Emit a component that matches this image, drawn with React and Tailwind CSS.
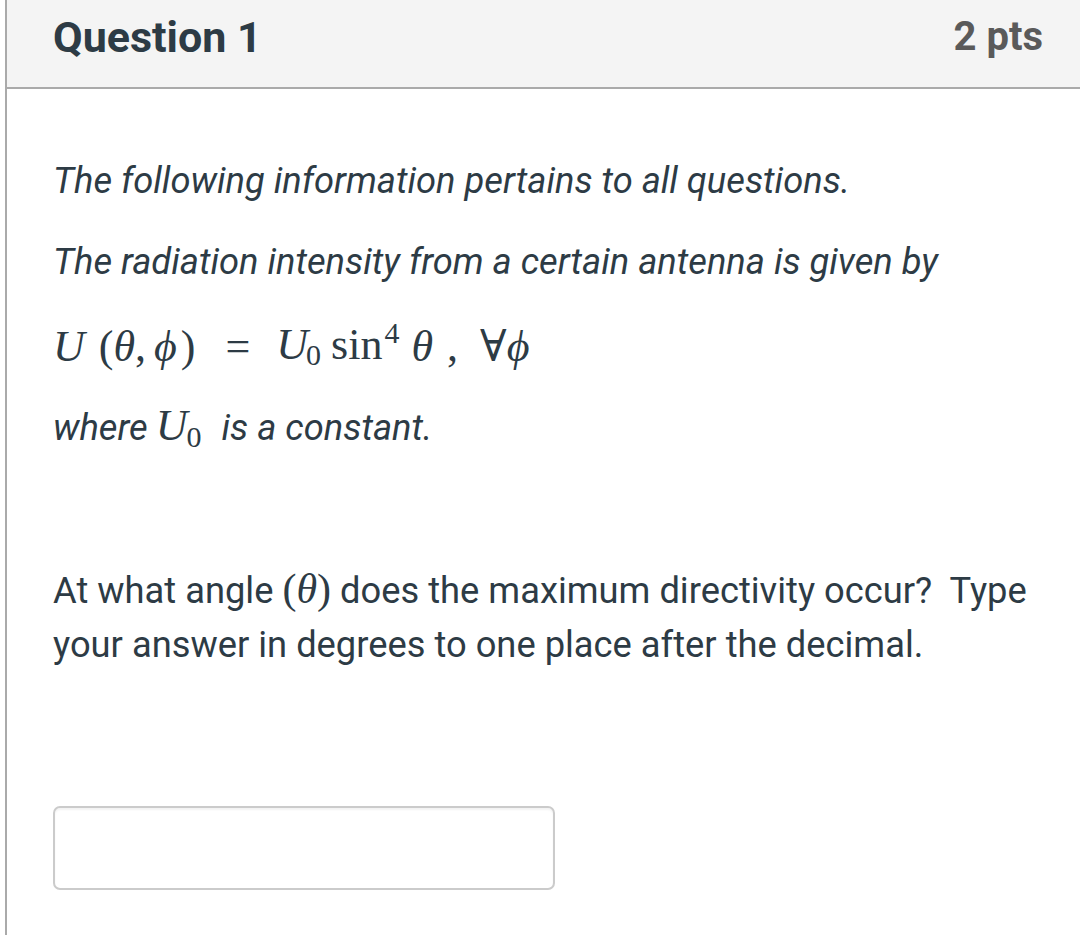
import React from 'react';

const serif = { fontFamily: '"Liberation Serif", "DejaVu Serif", serif' };

function MathI({ children, className = '' }) {
  return (
    <span className={`italic ${className}`} style={serif}>
      {children}
    </span>
  );
}

function MathR({ children, className = '' }) {
  return (
    <span className={className} style={serif}>
      {children}
    </span>
  );
}

export default function App() {
  return (
    <div className="w-[1080px] h-[935px] overflow-hidden bg-white font-['Roboto',sans-serif] text-[#2d3b45]">
      <div className="ml-[5px] w-[1090px] h-[935px] border-l-2 border-[#aaaaaa]">
        {/* header */}
        <div className="h-[89px] bg-[#f4f4f4] border-b-2 border-[#aaaaaa] flex justify-between px-[46px] pt-[12px]">
          <h2 className="text-[43px] leading-[50px] font-bold text-[#2d3b45]">Question 1</h2>
          <div className="text-[40px] leading-[50px] font-bold text-[#5a5a5a] mr-[6px]">2 pts</div>
        </div>

        {/* body */}
        <div className="px-[46px] pt-[65px] text-[36.3px] leading-[54px]">
          <p className="italic mb-[27px]">The following information pertains to all questions.</p>
          <p className="italic mb-[27px]">The radiation intensity from a certain antenna is given by</p>

          <p className="mb-[25px] h-[58px] flex items-center text-[44px] leading-[54px] pt-[4px]">
            <MathI>U</MathI>
            <MathR className="ml-[14px]">(</MathR>
            <MathI>θ</MathI>
            <MathR>,</MathR>
            <MathI className="ml-[8px]">ϕ</MathI>
            <MathR className="ml-[4px]">)</MathR>
            <MathR className="ml-[30px]">=</MathR>
            <span className="ml-[26px] inline-flex items-baseline">
              <MathI>U</MathI>
              <MathR className="text-[30px] relative top-[6px] -ml-[2px]">0</MathR>
            </span>
            <span className="ml-[10px] inline-flex items-baseline">
              <MathR>sin</MathR>
              <MathR className="text-[30px] relative -top-[16px] ml-[2px]">4</MathR>
            </span>
            <MathI className="ml-[12px]">θ</MathI>
            <MathR className="ml-[14px]">,</MathR>
            <MathR className="ml-[22px]">∀</MathR>
            <MathI>ϕ</MathI>
          </p>

          <p className="italic mb-[29px] flex items-baseline">
            <span>where</span>
            <span className="ml-[8px] inline-flex items-baseline not-italic">
              <MathI className="text-[44px]">U</MathI>
              <MathR className="text-[30px] relative top-[7px] -ml-[1px]">0</MathR>
            </span>
            <span className="ml-[20px]">is a constant.</span>
          </p>

          <p className="mb-[24px]">&nbsp;</p>

          <p className="mb-[27px] w-[990px]">
            At what angle <MathR className="text-[42px] leading-[0px]">(</MathR>
            <MathI className="text-[42px] leading-[0px]">θ</MathI>
            <MathR className="text-[42px] leading-[0px]">)</MathR> does the maximum directivity occur?&nbsp; Type your answer in degrees to one place after the decimal.
          </p>

          <div className="pt-[107px]">
            <input
              type="text"
              className="w-[502px] h-[84px] border-2 border-[#cbcbcb] rounded-[7px] bg-white outline-none shadow-[inset_0_2px_2px_rgba(0,0,0,0.05)]"
            />
          </div>
        </div>
      </div>
    </div>
  );
}
